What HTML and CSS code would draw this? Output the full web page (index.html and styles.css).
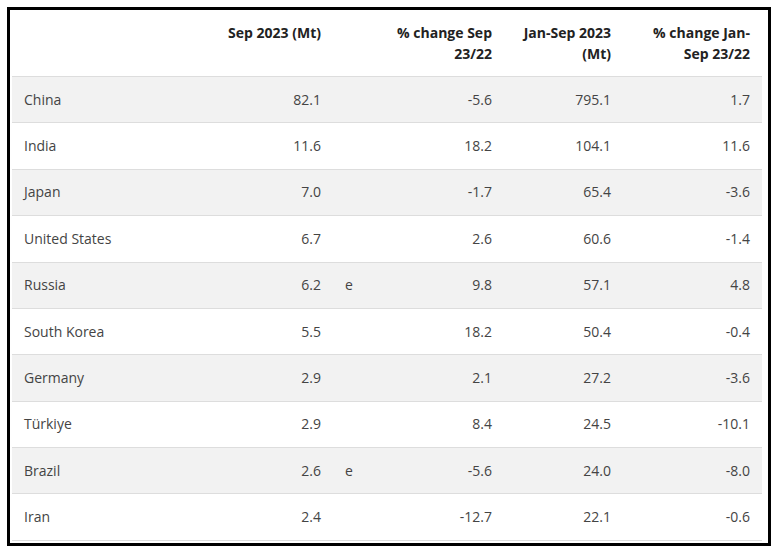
FILE: index.html
```html
<!DOCTYPE html>
<html lang="en">
<head>
<meta charset="utf-8">
<title>Steel production table</title>
<link rel="stylesheet" href="styles.css">
</head>
<body>
<div class="frame">
  <table class="data">
    <colgroup>
      <col class="c-country">
      <col class="c-sep">
      <col class="c-e">
      <col class="c-chg">
      <col class="c-ytd">
      <col class="c-ytdchg">
    </colgroup>
    <thead>
      <tr>
        <th class="left"></th>
        <th>Sep 2023 (Mt)</th>
        <th class="left"></th>
        <th>% change Sep 23/22</th>
        <th>Jan-Sep 2023 (Mt)</th>
        <th>% change Jan-Sep 23/22</th>
      </tr>
    </thead>
    <tbody>
      <tr><td class="left">China</td><td>82.1</td><td class="left"></td><td>-5.6</td><td>795.1</td><td>1.7</td></tr>
      <tr><td class="left">India</td><td>11.6</td><td class="left"></td><td>18.2</td><td>104.1</td><td>11.6</td></tr>
      <tr><td class="left">Japan</td><td>7.0</td><td class="left"></td><td>-1.7</td><td>65.4</td><td>-3.6</td></tr>
      <tr><td class="left">United States</td><td>6.7</td><td class="left"></td><td>2.6</td><td>60.6</td><td>-1.4</td></tr>
      <tr><td class="left">Russia</td><td>6.2</td><td class="left">e</td><td>9.8</td><td>57.1</td><td>4.8</td></tr>
      <tr><td class="left">South Korea</td><td>5.5</td><td class="left"></td><td>18.2</td><td>50.4</td><td>-0.4</td></tr>
      <tr><td class="left">Germany</td><td>2.9</td><td class="left"></td><td>2.1</td><td>27.2</td><td>-3.6</td></tr>
      <tr><td class="left">Türkiye</td><td>2.9</td><td class="left"></td><td>8.4</td><td>24.5</td><td>-10.1</td></tr>
      <tr><td class="left">Brazil</td><td>2.6</td><td class="left">e</td><td>-5.6</td><td>24.0</td><td>-8.0</td></tr>
      <tr><td class="left">Iran</td><td>2.4</td><td class="left"></td><td>-12.7</td><td>22.1</td><td>-0.6</td></tr>
    </tbody>
  </table>
</div>
</body>
</html>
```
FILE: styles.css
```css
html, body {
  margin: 0;
  padding: 0;
  background: #ffffff;
}

body {
  font-family: "Open Sans", "Noto Sans", "Liberation Sans", sans-serif;
  font-size: 14px;
  color: #444444;
}

.frame {
  margin: 7px;
  width: 750px;
  height: 533px;
  border: 3px solid #000000;
  padding: 0 6px 0 2px;
  box-sizing: content-box;
  background: #ffffff;
}

.data {
  width: 750px;
  table-layout: fixed;
  border-collapse: collapse;
  border-spacing: 0;
}

.c-country { width: 188px; }
.c-sep { width: 133px; }
.c-e { width: 42px; }
.c-chg { width: 129px; }
.c-ytd { width: 119px; }
.c-ytdchg { width: 139px; }

.data th {
  font-weight: 700;
  color: #222222;
  text-align: right;
  vertical-align: top;
  line-height: 21px;
  padding: 12px;
  border-bottom: 1px solid #dddddd;
}

.data td {
  text-align: right;
  line-height: 20px;
  padding: 12.7px 12px;
  border-bottom: 1px solid #dddddd;
  white-space: nowrap;
}

.data .left {
  text-align: left;
}

.data tbody tr:nth-child(odd) td {
  background: #f2f2f2;
}
```
